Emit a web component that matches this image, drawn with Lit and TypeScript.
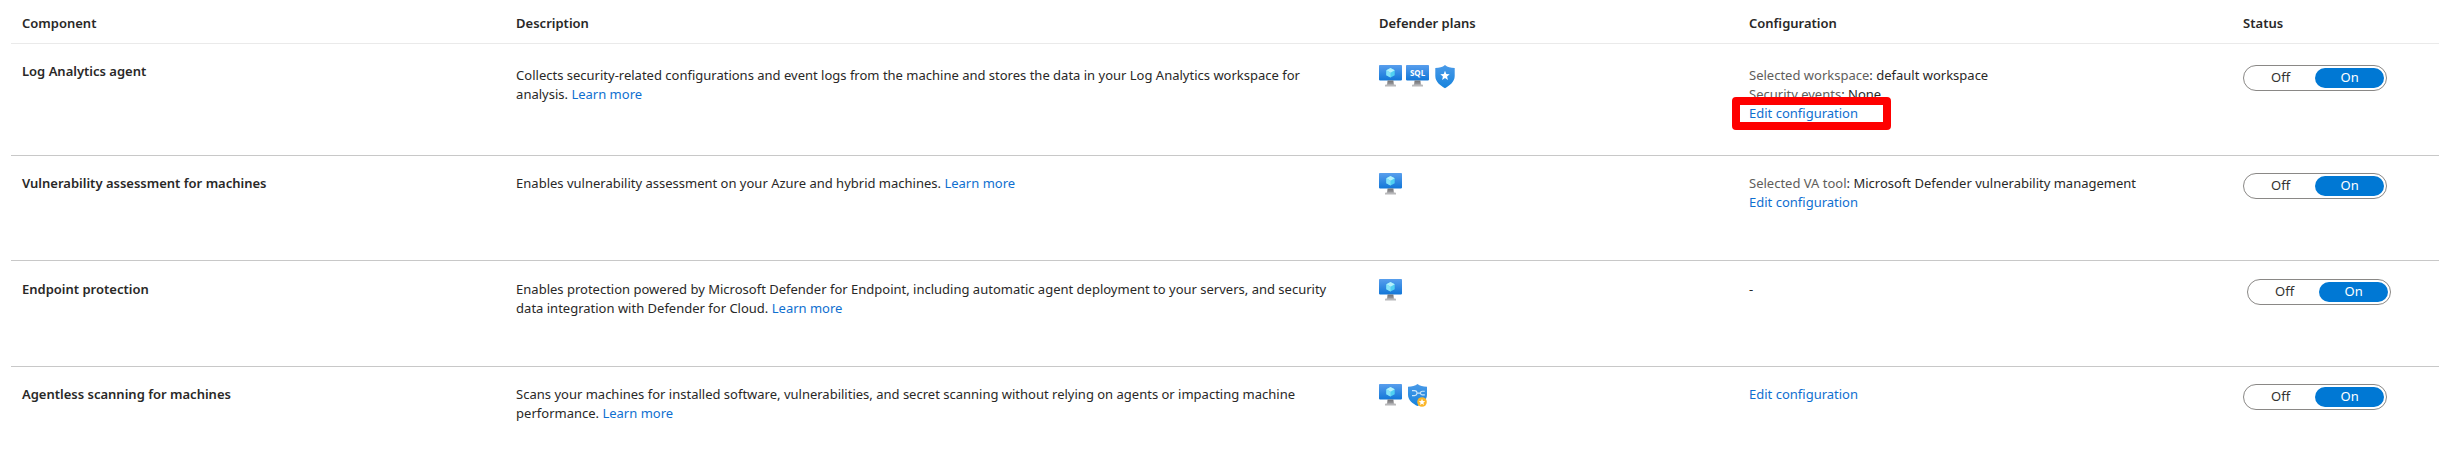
import { LitElement, html, css, svg, nothing, TemplateResult } from "lit";
import { customElement, property } from "lit/decorators.js";

type PlanIcon = "servers" | "sql" | "defender" | "cspm";

interface Setting {
  label: string;
  value: string;
}

interface ComponentRow {
  id: string;
  name: string;
  description: string;
  learnMore: boolean;
  plans: PlanIcon[];
  settings: Setting[];
  editable: boolean;
  variant?: "roomy" | "nested";
  highlighted?: boolean;
}

const ROWS: ComponentRow[] = [
  {
    id: "log-analytics",
    name: "Log Analytics agent",
    description:
      "Collects security-related configurations and event logs from the machine and stores the data in your Log Analytics workspace for analysis.",
    learnMore: true,
    plans: ["servers", "sql", "defender"],
    settings: [
      { label: "Selected workspace", value: "default workspace" },
      { label: "Security events", value: "None" },
    ],
    editable: true,
    variant: "roomy",
    highlighted: true,
  },
  {
    id: "vulnerability",
    name: "Vulnerability assessment for machines",
    description: "Enables vulnerability assessment on your Azure and hybrid machines.",
    learnMore: true,
    plans: ["servers"],
    settings: [{ label: "Selected VA tool", value: "Microsoft Defender vulnerability management" }],
    editable: true,
  },
  {
    id: "endpoint",
    name: "Endpoint protection",
    description:
      "Enables protection powered by Microsoft Defender for Endpoint, including automatic agent deployment to your servers, and security data integration with Defender for Cloud.",
    learnMore: true,
    plans: ["servers"],
    settings: [],
    editable: false,
    variant: "nested",
  },
  {
    id: "agentless",
    name: "Agentless scanning for machines",
    description:
      "Scans your machines for installed software, vulnerabilities, and secret scanning without relying on agents or impacting machine performance.",
    learnMore: true,
    plans: ["servers", "cspm"],
    settings: [],
    editable: true,
  },
];

@customElement("plan-icon")
export class PlanIconElement extends LitElement {
  @property() kind: PlanIcon = "servers";

  static styles = css`
    :host {
      display: block;
      width: 24px;
      height: 24px;
    }
    .glyph {
      display: block;
    }
    .sql {
      font: 700 8px "Noto Sans", sans-serif;
      fill: #fff;
    }
  `;

  private monitor(content: TemplateResult) {
    return svg`
      <rect x="0" y="0" width="23" height="15.4" rx="0.8" fill="url(#blue)" />
      <path d="M8.6 15.4h5.8l.5 4.6H8z" fill="url(#grey)" />
      <path d="M6 20.3q0-.8 1-.8h9q1 0 1 .8v1.2H6z" fill="#b8b8ba" />
      ${content}`;
  }

  private shape() {
    switch (this.kind) {
      case "sql":
        return this.monitor(svg`<text class="sql" x="11.5" y="10.6" text-anchor="middle">SQL</text>`);
      case "defender":
        return svg`
          <path d="M12 0c2.600 2.200 5.600 2.900 9.700 3v8.100c0 6-5.300 9.700-9.700 12.100-4.400-2.400-9.700-6.100-9.700-12.100V3c4.100-.1 7.100-.8 9.700-3z" fill="url(#shield)" />
          <path d="M12 5.800l1.300 3.200 3.400.3-2.600 2.200.8 3.400-2.900-1.800-2.900 1.800.8-3.400-2.600-2.200 3.400-.3z" fill="#fff" />`;
      case "cspm":
        return svg`
          <path d="M11.500 0c2.400 2 5.400 2.700 9.500 2.800v8c0 5.600-5 9-9.500 11.300C7 19.800 2 16.400 2 10.800v-8c4.100-.1 7.100-.8 9.500-2.800z" fill="url(#shield)" />
          <path d="M6 6.600h2.500a2.500 2.500 0 0 1 0 5H6M11 9.100h3" fill="none" stroke="#c9e6fb" stroke-width="1.100" />
          <path d="M18.800 7.300h-2.500a1.800 1.800 0 0 0 0 3.600h2.500" fill="none" stroke="#c9e6fb" stroke-width="1.100" />
          <circle cx="16" cy="18" r="4.800" fill="#fbb62a" />
          <path d="M16 14.800l.9 2.200 2.300.2-1.800 1.500.6 2.300-2-1.300-2 1.300.6-2.300-1.800-1.500 2.300-.2z" fill="#fff" />`;
      default:
        return this.monitor(svg`
          <path d="M11.500 3l4.200 2.300v4.900l-4.200 2.400-4.200-2.400V5.300z" fill="#50d0f2" />
          <path d="M11.500 3l4.200 2.300-4.200 2.400-4.200-2.400z" fill="#b5f1fc" />
          <path d="M11.500 7.700v4.900l-4.200-2.400V5.300z" fill="#86e2f8" />`);
    }
  }

  render() {
    return html`<svg class="glyph" width="24" height="24" viewBox="0 0 24 24" aria-hidden="true">
      <defs>
        <linearGradient id="blue" x1="0" y1="0" x2="0" y2="1">
          <stop offset="0" stop-color="#589eed" />
          <stop offset="1" stop-color="#1277d8" />
        </linearGradient>
        <linearGradient id="shield" x1="0" y1="0" x2="0" y2="1">
          <stop offset="0" stop-color="#4a9ae8" />
          <stop offset="1" stop-color="#1683dd" />
        </linearGradient>
        <linearGradient id="grey" x1="0" y1="0" x2="0" y2="1">
          <stop offset="0" stop-color="#707073" />
          <stop offset="1" stop-color="#a0a0a3" />
        </linearGradient>
      </defs>
      ${this.shape()}
    </svg>`;
  }
}

@customElement("on-off-switch")
export class OnOffSwitch extends LitElement {
  @property() name = "";
  @property() label = "";
  @property({ type: Boolean }) on = false;

  static styles = css`
    :host {
      display: block;
    }
    .track {
      display: flex;
      box-sizing: border-box;
      width: 144px;
      height: 26px;
      margin: 0;
      padding: 2px;
      border: 1px solid #8a8886;
      border-radius: 13px;
      background: #fff;
    }
    .option {
      flex: 1;
      border-radius: 10px;
      color: #323130;
      font-size: 13px;
      line-height: 19px;
      text-align: center;
      cursor: pointer;
    }
    .option:has(.radio:checked) {
      background: #0078d4;
      color: #fff;
    }
    .radio {
      position: absolute;
      margin: 0;
      opacity: 0;
      pointer-events: none;
    }
  `;

  render() {
    return html`<fieldset class="track" aria-label=${this.label}>
      <label class="option"><input class="radio" type="radio" name=${this.name} .checked=${!this.on} />Off</label>
      <label class="option"><input class="radio" type="radio" name=${this.name} .checked=${this.on} />On</label>
    </fieldset>`;
  }
}

@customElement("app-root")
export class AppRoot extends LitElement {
  static styles = css`
    :host {
      display: block;
      padding-left: 11px;
      background: #fff;
      color: #292827;
      font-family: "Segoe UI", "Noto Sans", sans-serif;
      font-size: 13px;
      line-height: 19px;
    }
    .components {
      width: 100%;
      border-collapse: separate;
      border-spacing: 0;
      table-layout: fixed;
    }
    .col-name,
    .col-config {
      width: 20.35%;
    }
    .col-description {
      width: 35.54%;
    }
    .col-plans {
      width: 15.24%;
    }
    .heading,
    .cell {
      box-sizing: border-box;
      padding: 18px 11px 0;
      text-align: left;
      vertical-align: top;
    }
    .heading {
      height: 44px;
      padding-top: 14px;
      border-bottom: 1px solid #eaeaea;
      font-weight: 600;
    }
    .cell {
      height: 105px;
      border-bottom: 1px solid #c8c8c8;
      font-weight: 400;
    }
    .cell.description {
      padding-right: 22px;
    }
    .roomy .cell {
      height: 112px;
      padding-top: 22px;
    }
    .nested .cell {
      height: 106px;
      padding-top: 19px;
    }
    .cell.name {
      font-weight: 600;
    }
    .roomy .cell.name {
      padding-top: 18px;
    }
    .row:last-child .cell {
      height: auto;
      border-bottom: 0;
    }
    .cell.graphic {
      padding-top: 17px;
    }
    .roomy .cell.graphic {
      padding-top: 21px;
    }
    .nested .cell.graphic {
      padding-top: 18px;
    }
    .nested .cell.status {
      padding-left: 15px;
    }
    .plans {
      display: flex;
      gap: 3px;
    }
    .key {
      color: #605e5c;
    }
    .link {
      color: #0f6fd0;
      text-decoration: none;
    }
    .link:hover {
      text-decoration: underline;
    }
    .edit {
      position: relative;
      width: max-content;
    }
    .callout {
      position: absolute;
      top: -7px;
      left: -17px;
      box-sizing: border-box;
      width: 159px;
      height: 33px;
      border: 8px solid #fe0000;
      border-radius: 4px;
      pointer-events: none;
    }
  `;

  private configuration(row: ComponentRow) {
    if (!row.settings.length && !row.editable) return html`-`;
    return html`${row.settings.map(
      (s) => html`<div><span class="key">${s.label}</span>: ${s.value}</div>`
    )}${row.editable
      ? html`<div class="edit">
          <a class="link" href="#${row.id}">Edit configuration</a>${row.highlighted
            ? html`<span class="callout"></span>`
            : nothing}
        </div>`
      : nothing}`;
  }

  render() {
    return html`<table class="components">
      <colgroup>
        <col class="col-name" />
        <col class="col-description" />
        <col class="col-plans" />
        <col class="col-config" />
        <col />
      </colgroup>
      <thead>
        <tr>
          ${["Component", "Description", "Defender plans", "Configuration", "Status"].map(
            (h) => html`<th class="heading" scope="col">${h}</th>`
          )}
        </tr>
      </thead>
      <tbody>
        ${ROWS.map(
          (row) => html`<tr class="row ${row.variant ?? ""}">
            <th class="cell name" scope="row">${row.name}</th>
            <td class="cell description">
              ${row.description} ${row.learnMore
                ? html`<a class="link" href="#learn-${row.id}">Learn more</a>`
                : nothing}
            </td>
            <td class="cell graphic">
              <div class="plans">${row.plans.map((p) => html`<plan-icon kind=${p}></plan-icon>`)}</div>
            </td>
            <td class="cell">${this.configuration(row)}</td>
            <td class="cell graphic status">
              <on-off-switch name=${row.id} label=${row.name} on></on-off-switch>
            </td>
          </tr>`
        )}
      </tbody>
    </table>`;
  }
}
